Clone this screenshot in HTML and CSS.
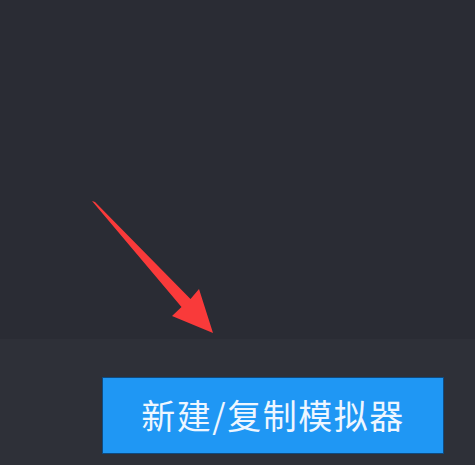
FILE: index.html
```html
<!DOCTYPE html>
<html lang="zh-CN">
<head>
<meta charset="utf-8">
<link rel="stylesheet" href="styles.css">
</head>
<body>
<div class="page">
  <div class="stage">
    <svg class="arrow" width="475" height="339" viewBox="0 0 475 339">
      <polygon points="92,201 95,202 190.5,299 199,289 213,333 172,316 181.5,307" fill="#f93a3a"/>
    </svg>
  </div>
  <div class="bar">
    <button class="btn">新建/复制模拟器</button>
  </div>
</div>
</body>
</html>
```
FILE: styles.css
```css
html, body {
  margin: 0;
  padding: 0;
  background: #2a2c34;
}
.page {
  width: 475px;
  height: 465px;
  display: flex;
  flex-direction: column;
  overflow: hidden;
}
.stage {
  height: 339px;
  background: #2a2c34;
}
.arrow {
  display: block;
  filter: blur(0.6px);
}
.bar {
  flex: 1;
  background: #2e3038;
  padding: 38px 0 0 102px;
}
.btn {
  width: 342px;
  height: 77px;
  box-sizing: border-box;
  border: 1px solid #0e4a80;
  background: #1f97f4;
  color: #eef6ff;
  font-family: "Noto Sans CJK SC", "Noto Sans", sans-serif;
  font-size: 34px;
  letter-spacing: 1.5px;
  padding: 0 0 2px 0;
  margin: 0;
  display: flex;
  align-items: center;
  justify-content: center;
}
```
